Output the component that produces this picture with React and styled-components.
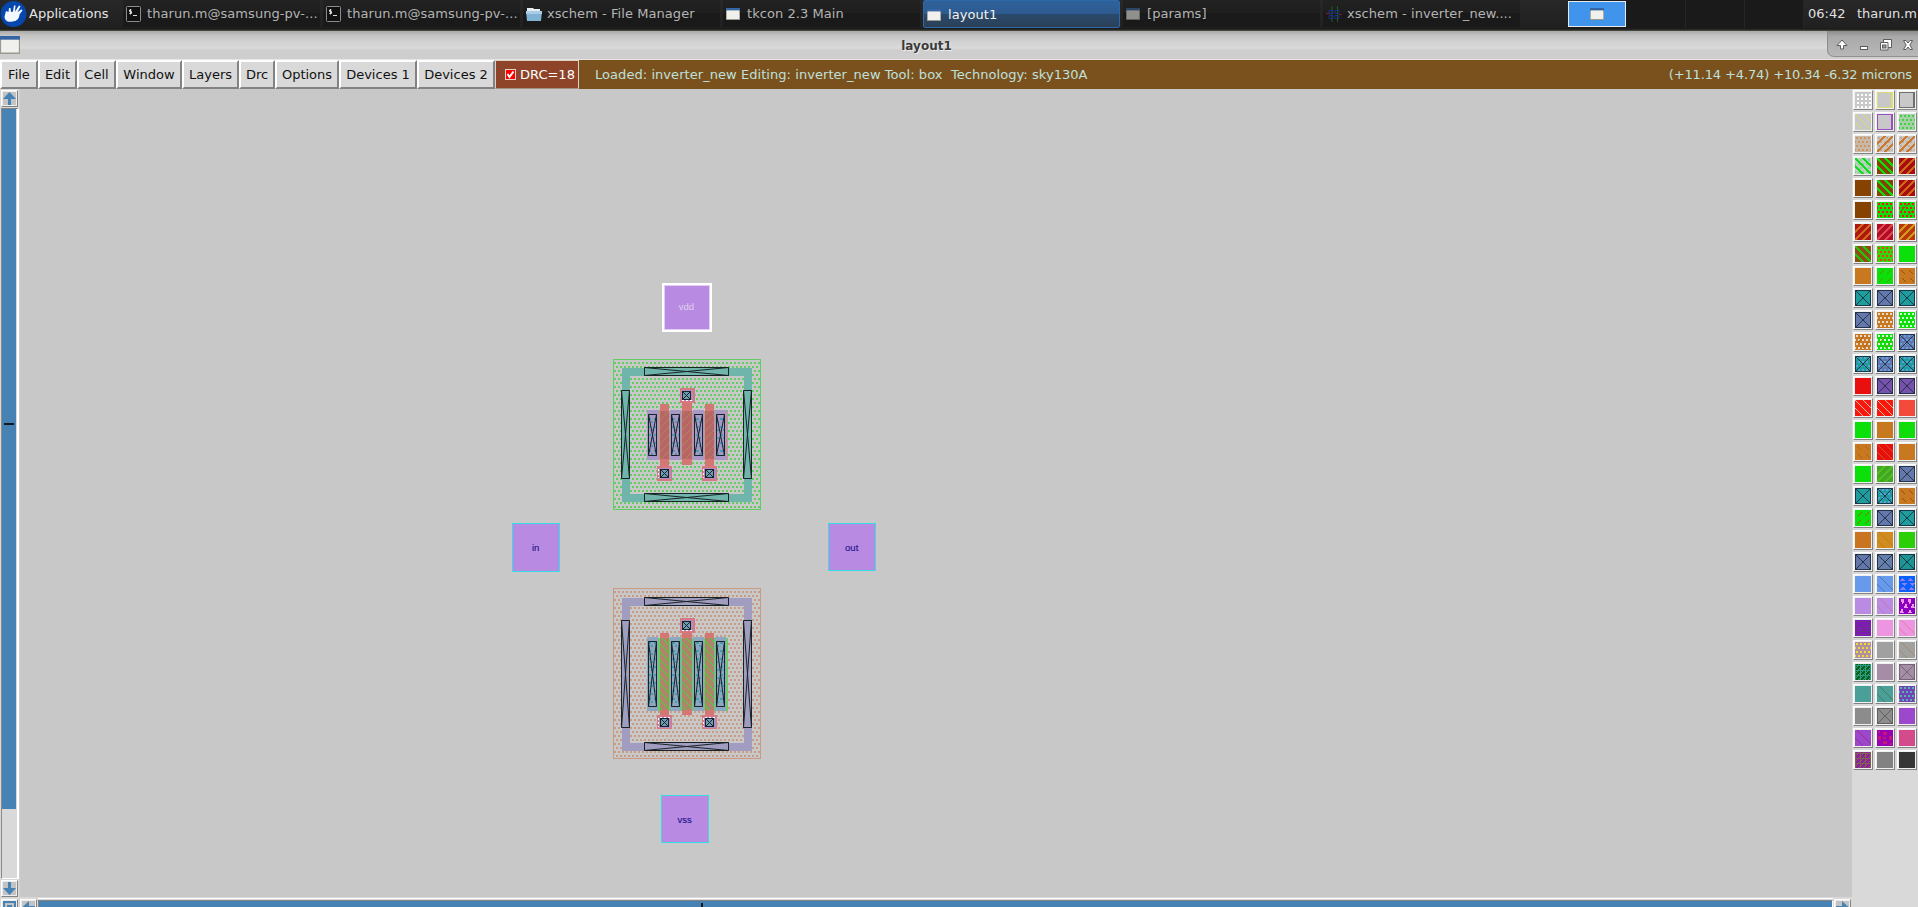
import React from "react";
import styled, { createGlobalStyle, css } from "styled-components";

const GlobalStyle = createGlobalStyle`
  html, body { margin: 0; padding: 0; overflow: hidden; background: #d9d9d9; }
  * { box-sizing: border-box; }
`;

const Desktop = styled.div`
  width: 1918px;
  height: 907px;
  display: flex;
  flex-direction: column;
  overflow: hidden;
  font-family: "DejaVu Sans", sans-serif;
  font-size: 13px;
`;

/* ---------- panel ---------- */

const Panel = styled.header`
  height: 31px;
  flex: none;
  display: flex;
  align-items: flex-start;
  background: linear-gradient(#282828, #202020 28px, #191919 29px, #35352f 30px, #55554d 31px);
  color: #b4b4b4;
  white-space: pre;
`;

const AppMenu = styled.div`
  width: 123px;
  height: 27px;
  display: flex;
  align-items: center;
  gap: 2px;
  color: #e4e4e4;
  svg { flex: none; }
`;

const TaskList = styled.nav`
  display: flex;
  gap: 3px;
  width: 1445px;
`;

const Task = styled.div`
  width: 197px;
  height: 27px;
  padding: 0 0 0 3px;
  display: flex;
  align-items: center;
  letter-spacing: 0.06px;
  background: linear-gradient(#222 0, #1e1e1e 50%, #191919 50%, #1a1a1a 100%);
  ${(p) =>
    p.$active &&
    css`
      height: 28px;
      padding: 1px 0 0 3px;
      color: #f2f2f2;
      border: 1px solid #2d68a8;
      border-radius: 2px;
      background: linear-gradient(#2f6199 0, #2d5b90 50%, #2a4a6c 50%, #2b4057 100%);
    `}
`;

const TaskIcon = styled.span`
  width: 21px;
  flex: none;
  line-height: 0;
  opacity: ${(p) => (p.$dim ? 0.55 : 1)};
`;

const Pager = styled.div`
  display: flex;
  width: 236px;
  height: 28px;
  background: #1a1a1a;
`;

const Workspace = styled.div`
  width: 59px;
  height: 28px;
  display: flex;
  align-items: center;
  justify-content: center;
  border-right: 1px solid #262626;
  ${(p) =>
    p.$active &&
    css`
      width: 58px;
      height: 26px;
      margin: 1px 1px 0 0;
      background: #4094ec;
      border: 1px solid #e8ecf0;
    `}
`;

const PanelText = styled.div`
  height: 27px;
  line-height: 27px;
  width: ${(p) => p.$w}px;
  padding-left: 4px;
  color: #e0e0e0;
`;

/* ---------- title bar ---------- */

const TitleBar = styled.div`
  height: 29px;
  flex: none;
  display: flex;
  background: linear-gradient(#a9a9a9 0, #c2c2c2 4px, #d2d2d2 11px, #dadada 17px, #cecece 19px, #cecece 28px, #e6e6e6 28px);
`;

const TitleIcon = styled.div`
  width: 91px;
  padding-top: 5px;
  line-height: 0;
`;

const Title = styled.div`
  flex: 1;
  font-weight: bold;
  font-size: 12px;
  line-height: 30px;
  padding-right: 65px;
  text-align: center;
  color: #3b3b3b;
  text-shadow: 1px 1px 0 #eee;
`;

const WindowControls = styled.div`
  width: 91px;
  height: 26px;
  border-bottom-left-radius: 7px;
  border-left: 1px solid #8c8c8c;
  border-bottom: 1px solid #929292;
  background: linear-gradient(#8d8d8d, #aaa 6px, #b7b7b7);
  line-height: 0;
`;

/* ---------- menu bar ---------- */

const MenuBar = styled.div`
  height: 29px;
  flex: none;
  display: flex;
  background: #d9d9d9;
  color: #000;
  white-space: pre;
`;

const MenuButton = styled.button`
  width: ${(p) => p.$w}px;
  height: 29px;
  padding: 0 0 1px;
  font: inherit;
  color: #111;
  background: #d9d9d9;
  border-style: solid;
  border-width: 2px;
  border-color: #fff #828282 #828282 #fff;
  text-align: center;
`;

const DrcButton = styled.div`
  width: 84px;
  height: 29px;
  display: flex;
  align-items: center;
  gap: 4px;
  padding: 0 0 1px 9px;
  color: #fff;
  background: #8e4429;
  border: 1px solid #dcd0c8;
  border-bottom-color: #a09080;
`;

const Status = styled.div`
  flex: 1;
  display: flex;
  justify-content: space-between;
  align-items: center;
  padding: 0 6px 1px 16px;
  background: #7a501c;
  color: #bfe0dc;
`;

const StatusText = styled.span`
  letter-spacing: ${(p) => p.$track}px;
`;

/* ---------- work area ---------- */

const WorkArea = styled.main`
  height: 818px;
  display: grid;
  grid-template-columns: 20px 1832px 66px;
  background: #d9d9d9;
`;

const SideScroll = styled.div`
  display: flex;
  flex-direction: column;
  height: 818px;
  overflow: hidden;
  border-right: 1px solid #d0d0d0;
`;

const ArrowButton = styled.div`
  width: 17px;
  height: 17px;
  margin: ${(p) => p.$m};
  flex: none;
  background: #c3c3c3;
  border-style: solid;
  border-width: 1px;
  border-color: #fff #828282 #828282 #fff;
  outline: 1px solid #ececec;
  outline-offset: -2px;
  line-height: 0;
`;

const VerticalTrough = styled.div`
  width: 18px;
  height: 771px;
  flex: none;
  margin: 0 0 0 1px;
  border: 1px solid #828282;
  border-right: 2px solid #fff;
  border-bottom: 1px solid #fff;
  border-left-color: #8a8a8a;
  background: #d9d9d9;
`;

const VerticalThumb = styled.div`
  width: 14px;
  height: 700px;
  padding-top: 314px;
  background: #4682b4;
`;

const VerticalMark = styled.div`
  width: 10px;
  height: 2px;
  margin-left: 2px;
  background: #101820;
`;

const CenterColumn = styled.div`
  display: flex;
  flex-direction: column;
  height: 818px;
  overflow: hidden;
`;

const LayoutView = styled.div`
  height: 808px;
  flex: none;
  background: #c8c8c8;
  line-height: 0;
`;

const BottomScroll = styled.div`
  display: flex;
  height: 20px;
  flex: none;
  border-top: 1px solid #d9d9d9;
`;

const HorizontalTrough = styled.div`
  flex: 1;
  height: 18px;
  border-top: 1px solid #fff;
  padding-top: 1px;
`;

const HorizontalThumb = styled.div`
  height: 14px;
  background: #4682b4;
  border-top: 1px solid #828282;
  border-left: 1px solid #828282;
  border-right: 1px solid #fff;
  padding: 2px 0 0 662px;
`;

const HorizontalMark = styled.div`
  width: 2px;
  height: 10px;
  background: #101820;
`;

const Palette = styled.aside`
  display: grid;
  grid-template-columns: repeat(3, 20px);
  grid-auto-rows: 20px;
  gap: 2px;
  align-content: start;
  padding: 1px 0 0 1px;
`;

const Cell = styled.div`
  width: 20px;
  height: 20px;
  padding: 1px;
  border-style: solid;
  border-width: 1px;
  border-color: #fff #828282 #828282 #fff;
  background: #f0f0f0;
  line-height: 0;
`;

/* ---------- icons ---------- */

const MouseLogo = () => (
  <svg width="27" height="27" viewBox="0 0 27 27">
    <ellipse cx="13.5" cy="14" rx="13" ry="13" fill="#0647ad" />
    <path d="M6 11l2.500 1L9 8l1.500 0 .5 4 2-.5 1-6 1.500 0-.5 6 4-6 1.500 .8-3 6 4-3 1 1.200-3 4c0 4-3 7-7 7-5 1-8-1-8-5z" fill="#f4f8ff" />
  </svg>
);
const TerminalIcon = () => (
  <svg width="15" height="16" viewBox="0 0 15 16">
    <rect x=".5" y=".5" width="14" height="15" rx="1" fill="#101010" stroke="#8c8c8c" />
    <path d="M5.5 4H3.5v1.5h2V7.500H3.300M4.500 3v5.500M7 9.500h4" stroke="#ddd" fill="none" />
  </svg>
);
const FolderIcon = () => (
  <svg width="16" height="14" viewBox="0 0 16 14">
    <path d="M1 1h6l1 1h6v5H1z" fill="#e6eef2" />
    <path d="M0 4h16l-1 10H1z" fill="#7fb2d4" />
    <path d="M0 4h16v3H0z" fill="#a8cde4" />
  </svg>
);
const WindowIcon = ({ w = 14, h = 12 }) => (
  <svg width={w} height={h} viewBox="0 0 14 12" preserveAspectRatio="none">
    <rect width="14" height="12" fill="#9a9a90" />
    <rect width="14" height="2.500" fill="#3465a4" />
    <rect x=".8" y="2.500" width="12.400" height="8.500" fill="#f0f0ec" />
  </svg>
);
const CircuitIcon = () => (
  <svg width="16" height="16" viewBox="0 0 16 16" fill="none">
    <path d="M6 0v16M11.500 0v16" stroke="#1c5c1c" />
    <path d="M3 4.500h4v3H3zM9 4.500h4v3H9zM3 9.500h4v3H3zM9 9.500h4v3H9z" stroke="#1c2f80" />
    <path d="M0 7.500h3M13 8.500h3" stroke="#802020" />
  </svg>
);

const arrowPaths = {
  up: "M7.500 1L14 8H9v6H6V8H1z",
  down: "M7.500 14L14 7H9V1H6v6H1z",
  left: "M1 7.500L8 1v5h6v3H8v5z",
  right: "M14 7.500L7 1v5H1v3h6v5z",
};
const Arrow = ({ dir }) => (
  <svg width="15" height="15" viewBox="0 0 15 15">
    <path d={arrowPaths[dir]} fill="#4682b4" />
  </svg>
);

const ControlIcons = () => (
  <svg width="90" height="25" viewBox="0 0 90 25">
    <g fill="#fff" stroke="#5c5c5c" strokeWidth="1">
      <path d="M14 9l5 5.500h-3.500V18h-3v-3.500H9z" />
      <rect x="32.500" y="15.500" width="7" height="3" />
      <path d="M55.500 8.500h8v8h-8z" />
      <path d="M52.500 11.500h7.500v7.500h-7.500z" />
      <rect x="54.500" y="14" width="3.500" height="3" fill="#999" />
      <path d="M75.500 9.500H78l2 2.500 2-2.500h2.500l-2.700 4.500 2.700 4.500H82L80 16l-2 2.500h-2.500l2.700-4.500z" />
    </g>
  </svg>
);

/* ---------- layer swatches ---------- */

const G = "#0be00b", O = "#c8781f", T = "#1f9c9c", B = "#6478ac", N = "#c8c8c8";
const BR = "#854200", R = "#e90f0f";

// [kind, base colour, mark colour, second mark colour]
const LAYERS = [
  ["grid", N, "#fff"], ["frame", N, "#dcdc70"], ["frame", N, "#707070"],
  ["fine", N, "#dedc60"], ["frame", N, "#9850c0"], ["dots", "#a8d0a8", "#40d440"],
  ["dots", "#c8b8a8", "#cc9860"], ["slash", N, "#cc7a30", "#c8a888"], ["slash", N, "#cc7a30", "#c8a888"],
  ["back", "#c0d0c0", "#14dc24", "#80d888"], ["back", BR, G], ["slash", "#a80c0c", "#cc6818"],
  ["solid", BR], ["back", BR, G], ["slash", "#a80c0c", "#cc6818"],
  ["solid", BR], ["dots", G, "#ee1a10"], ["dots", G, "#ee1a10", "#7a6800"],
  ["slash", "#ad170c", "#d06820"], ["slash", "#b30c24", "#dc4850"], ["slash", "#b83808", "#d49820"],
  ["back", "#8c4c12", "#24c40c"], ["dots", "#30d70b", "#e64414"], ["solid", G],
  ["solid", O], ["dash", G, "#5f9300"], ["backdash", O, "#985010"],
  ["x", T], ["x", B], ["x", T],
  ["x", B], ["dots", O, "#e6dacc"], ["dots", G, "#d8f4d8"],
  ["dots", O, "#e6dacc", "#a86020"], ["dots", G, "#d8f4d8", "#a88020"], ["x", B, "#639ee9"],
  ["x", T, "#5b9edc"], ["x", B, "#639ee9"], ["x", T, "#5b9edc"],
  ["solid", R], ["x", "#7652ac"], ["x", "#7652ac"],
  ["fine", "#fa180b", "#d8b8b8"], ["fine", "#fa180b", "#d8b8b8"], ["solid", "#f44a3c"],
  ["solid", G], ["solid", O], ["dash", G, "#52b414"],
  ["backdash", O, "#ae661c"], ["fine", R, "#c65e18"], ["solid", O],
  ["solid", G], ["slash", "#3ea824", "#54bc20"], ["x", B],
  ["x", T], ["x", T, "#5b9edc"], ["backdash", O, "#9c4c10"],
  ["dash", G, "#807000"], ["x", B], ["x", T],
  ["solid", "#c87420"], ["thin", "#d18c20", "#bb7b22"], ["solid", "#2acf08"],
  ["x", "#6377aa"], ["x", "#667faa"], ["x", "#1e9494"],
  ["solid", "#679aea"], ["thin", "#679aea", "#5078b0"], ["waves", "#0a60ff", "#8c80e8"],
  ["solid", "#b98be2"], ["thin", "#b98be2", "#d070b4"], ["cones", "#8c00c0", "#ee98ee"],
  ["bands", "#8018b8", "#6c3488"], ["solid", "#ec96e2"], ["thin", "#ec96e2", "#f07a9c"],
  ["dots", "#b08ea8", "#ece020"], ["solid", "#a0a0a0"], ["thin", "#a0a0a0", "#a88860"],
  ["noise", "#08601c", "#2c9c80"], ["solid", "#a58da5"], ["x", "#a58da5", null, "#746474"],
  ["solid", "#4b9f99"], ["thin", "#4b9f99", "#4c7c58"], ["dots", "#7044b4", "#54b4b0"],
  ["solid", "#8c8c8c"], ["x", "#8c8c8c", null, "#606060"], ["solid", "#9c48cc"],
  ["thin", "#9c48cc", "#98308c"], ["rings", "#9800b4", "#c41878"], ["solid", "#d44b8c"],
  ["noise", "#8c1ca0", "#806050"], ["solid", "#828282"], ["solid", "#363636"],
];

const staggered = (color) => {
  const out = [];
  for (let r = 0; r < 4; r++)
    for (let c = 0; c < 5; c++)
      out.push(<rect key={r + "-" + c} x={c * 4 + (r % 2 ? -1 : 1)} y={r * 4 + 1} width="2" height="2" fill={color} />);
  return out;
};

const Swatch = ({ layer }) => {
  const [kind, base, mark, extra] = layer;
  let marks = null;
  if (kind === "grid")
    marks = [0, 1, 2, 3].flatMap((r) =>
      [0, 1, 2, 3].map((c) => <rect key={`${r}${c}`} x={c * 4 + 2} y={r * 4 + 2} width="2" height="2" fill={mark} />)
    );
  if (kind === "frame") marks = <path d="M.5 .5h15v15H.5zM14.500 0v16" fill="none" stroke={mark} />;
  if (kind === "dots") marks = <>{staggered(mark)}{extra && <path d="M2 9L9 2M8 14l6-6" stroke={extra} />}</>;
  if (kind === "slash")
    marks = <>{extra && staggered(extra)}<path d="M-1 9L9-1M-1 17L17-1M7 17L17 7" stroke={mark} strokeWidth="1.800" /></>;
  if (kind === "back")
    marks = <>{extra && staggered(extra)}<path d="M-1 7L9 17M-1-1L17 17M7-1L17 9" stroke={mark} strokeWidth="1.800" /></>;
  if (kind === "fine") marks = <path d="M-1 7L9 17M-1-1L17 17M7-1L17 9" stroke={mark} />;
  if (kind === "thin") marks = <path d="M0 8L8 16M2 0L16 14" stroke={mark} />;
  if (kind === "dash") marks = <path d="M3 6l4-4M10 6l4-4M2 14l4-4M10 14l4-4" stroke={mark} />;
  if (kind === "backdash") marks = <path d="M2 2l4 4M10 2l4 4M3 10l4 4M11 10l4 4" stroke={mark} />;
  if (kind === "x")
    marks = (
      <>
        {mark && staggered(mark)}
        <path d="M0 0L16 16M16 0L0 16M.5.5h15v15H.5z" stroke={extra || "#182838"} strokeOpacity={extra ? 1 : 0.85} fill="none" />
      </>
    );
  if (kind === "waves") marks = <path d="M0 5l3-3 3 3zM8 5l3-3 4 3zM2 7h6l-3 3zM10 7h6l-3 3zM0 14l4-3 4 3zM9 14l3-3 4 3z" fill={mark} />;
  if (kind === "cones") marks = <path d="M2 1h3v3l-2 3zM9 1h3v3l-2 3zM5 9l2-4 2 5H5zM12 9l2-4 2 5h-4zM1 14l2-4 2 5H1zM9 15l2-4 2 4z" fill={mark} />;
  if (kind === "bands") marks = <path d="M0 1.500h16M0 4.500h3M6 4.500h4M13 4.500h3M0 7.500h16M3 9.500h4M10 9.500h3M0 11.500h16M0 14.500h16" stroke={mark} />;
  if (kind === "rings") marks = <path d="M6 2h4v3H6zM1 6h3v4H1zM12 6h3v4h-3zM6 11h4v3H6zM6 7h3v2H6zM1 1h2v2H1zM13 13h2v2h-2z" fill={mark} />;
  if (kind === "noise") {
    marks = [];
    for (let y = 0; y < 16; y++)
      for (let x = 0; x < 16; x++)
        if ((x * 7 + y * 5 + x * y * 3) % 5 < 2) marks.push(<rect key={`${x}-${y}`} x={x} y={y} width="1" height="1" fill={mark} />);
  }
  return (
    <svg width="16" height="16" viewBox="0 0 16 16" shapeRendering="crispEdges">
      <rect width="16" height="16" fill={base} />
      {marks}
    </svg>
  );
};

/* ---------- chip drawing ---------- */

const Crossed = ({ x, y, w, h, fill = "none" }) => (
  <path
    d={`M${x + 0.5} ${y + 0.5}h${w - 1}v${h - 1}h${1 - w}zl${w - 1} ${h - 1}M${x + w - 0.5} ${y + 0.5}l${1 - w} ${h - 1}`}
    fill={fill}
    stroke="#182326"
    strokeWidth="1"
  />
);

const ViaPad = ({ x, y, w = 15, h = 15, bx, by, dashSide }) => (
  <g shapeRendering="crispEdges">
    <rect x={x} y={y} width={w} height={h} fill="#d87880" />
    <rect x={bx - 1} y={by - 1} width={12} height={11} fill="#b08cc4" />
    <path
      d={dashSide === "bottom" ? `M${bx} ${by + 9.5}h10` : dashSide === "left" ? `M${bx - 1.5} ${by}v9` : `M${bx} ${by - 0.5}h10M${bx - 1.5} ${by}v9`}
      stroke="#fff"
      strokeDasharray="2 2"
    />
    <rect x={bx} y={by} width="9" height="9" fill="#6c9cb4" />
    <Crossed x={bx} y={by} w={9} h={9} />
  </g>
);

const Transistor = ({ top, bottom, dots, ring, wellTop, sideTop, sideH, diffTop, diffH, diff, diffEdge, gate, gateHatch, overlap, id, pads, gateTop, gateBottom, fingerFill }) => (
  <g>
    <defs>
      <pattern id={`${id}-dots`} width="4" height="8" patternUnits="userSpaceOnUse" x="613" y={top}>
        <path d="M1 3h2v2H1zM-1 7h2v2h-2zM3 7h2v2H3zM-1-1h2v2h-2zM3-1h2v2H3z" fill={dots} />
      </pattern>
      <pattern id={`${id}-hatch`} width="8" height="8" patternUnits="userSpaceOnUse">
        <path d={overlap} stroke={gateHatch} strokeWidth="1.200" fill="none" />
      </pattern>
      <pattern id={`${id}-metal`} width="6" height="8" patternUnits="userSpaceOnUse">
        <path d="M0 2h3v2H0zM3 5h2v2H3z" fill="#449cae" />
      </pattern>
    </defs>
    <g shapeRendering="crispEdges">
      <rect x="613.500" y={top + 0.5} width="147" height={bottom - top - 1} fill={`url(#${id}-dots)`} stroke={dots} />
      <path d={`M625.500 ${wellTop + 4.5}H747.500V${bottom - 12.500}H625.500z`} fill="none" stroke={ring} strokeWidth="8" />
      <rect x="647" y={diffTop} width="80" height={diffH} fill={diff} stroke={diffEdge} />
    </g>
    <Crossed x={644} y={wellTop} w={85} h={9} />
    <Crossed x={644} y={bottom - 17} w={85} h={9} />
    <Crossed x={621} y={sideTop} w={9} h={sideH} />
    <Crossed x={743} y={sideTop} w={9} h={sideH} />
    <g shapeRendering="crispEdges">
      {[[660, 9, gateTop + 3, gateBottom], [682, 10, gateTop, gateBottom - 2], [705, 9, gateTop + 3, gateBottom]].map(([x, w, y1, y2]) => (
        <g key={x}>
          <rect x={x - 2} y={diffTop} width={w + 4} height={diffH} fill={diffEdge} />
          <rect x={x} y={y1} width={w} height={y2 - y1} fill="#d37674" />
          <rect x={x} y={diffTop} width={w} height={diffH} fill={gate} />
        </g>
      ))}
      {[648, 671, 694, 716].map((x) => (
        <g key={x}>
          <rect x={x - 1} y={diffTop - 1} width="11" height={diffH + 2} fill={fingerFill} />
          <rect x={x} y={diffTop + 3} width="9" height={diffH - 6} fill={`url(#${id}-metal)`} />
        </g>
      ))}
    </g>
    {[[660, 9], [682, 10], [705, 9]].map(([x, w]) => (
      <rect key={x} x={x} y={diffTop} width={w} height={diffH} fill={`url(#${id}-hatch)`} />
    ))}
    {[648, 671, 694, 716].map((x) => (
      <Crossed key={x} x={x} y={diffTop + 3} w={9} h={diffH - 6} />
    ))}
    {pads.map((p, i) => (
      <ViaPad key={i} {...p} />
    ))}
  </g>
);

const PortLabel = styled.text`
  font-family: "Liberation Sans", Arial, sans-serif;
  font-size: 9.5px;
  text-anchor: middle;
  fill: ${(p) => p.$color};
  stroke: ${(p) => p.$color};
  stroke-width: 0.1px;
`;

const Port = ({ x, y, h = 48, label }) => (
  <g>
    <rect x={x + 0.5} y={y + 0.5} width="47" height={h - 1} fill="#b88ae2" stroke="#38dce4" />
    <PortLabel x={x + 23.7} y={y + 28} $color="#18128c">
      {label}
    </PortLabel>
  </g>
);

const ChipLayout = () => (
  <svg width="1832" height="808" viewBox="20 89 1832 808">
    <rect x="663" y="284" width="48" height="47" fill="#b88ae2" stroke="#fff" strokeWidth="2" />
    <rect x="664.500" y="285.500" width="45" height="44" fill="none" stroke="#e2cff4" />
    <PortLabel x="686.500" y="310" $color="#dccdee">
      vdd
    </PortLabel>
    <Transistor
      id="pmos" top={359} bottom={510} dots="#62cd62" ring="#6fb5ab" wellTop={367}
      sideTop={390} sideH={89} diffTop={411} diffH={48} diff="#b49aa4" diffEdge="#c09696"
      gate="#b86468" gateHatch="#a88450" overlap="M-1 9L9-1" fingerFill="#a898c8" gateTop={401} gateBottom={467}
      pads={[
        { x: 680, y: 388, bx: 682, by: 391, dashSide: "bottom" },
        { x: 657, y: 466, bx: 660, by: 469, dashSide: "left" },
        { x: 702, y: 466, bx: 705, by: 469, dashSide: "left" },
      ]}
    />
    <Transistor
      id="nmos" top={588} bottom={759} dots="#c99b85" ring="#a09dc0" wellTop={597}
      sideTop={620} sideH={108} diffTop={638} diffH={72} diff="#74c874" diffEdge="#68ca68"
      gate="#b0846c" gateHatch="#58c838" overlap="M-1-1L9 9" fingerFill="#8ca8c0" gateTop={630} gateBottom={717}
      pads={[
        { x: 680, y: 618, bx: 682, by: 621, dashSide: "bottom" },
        { x: 657, y: 715, h: 14, bx: 660, by: 718 },
        { x: 702, y: 715, h: 14, bx: 705, by: 718 },
      ]}
    />
    <Port x={512} y={523} h={49} label="in" />
    <Port x={828} y={523} label="out" />
    <Port x={661} y={795} label="vss" />
  </svg>
);

/* ---------- page ---------- */

const MENUS = [["File", 38], ["Edit", 39], ["Cell", 39], ["Window", 66], ["Layers", 57], ["Drc", 36], ["Options", 64], ["Devices 1", 78], ["Devices 2", 78]];

const TASKS = [
  { icon: <TerminalIcon />, label: "tharun.m@samsung-pv-..." },
  { icon: <TerminalIcon />, label: "tharun.m@samsung-pv-..." },
  { icon: <FolderIcon />, label: "xschem - File Manager" },
  { icon: <WindowIcon />, label: "tkcon 2.3 Main" },
  { icon: <WindowIcon />, label: "layout1", active: true },
  { icon: <WindowIcon />, label: "[params]", dim: true },
  { icon: <CircuitIcon />, label: "xschem - inverter_new...." },
];

export default function App() {
  return (
    <Desktop>
      <GlobalStyle />
      <Panel>
        <AppMenu>
          <MouseLogo />
          Applications
        </AppMenu>
        <TaskList>
          {TASKS.map((t, i) => (
            <Task key={i} $active={t.active}>
              <TaskIcon $dim={t.dim}>{t.icon}</TaskIcon>
              <span>{t.label}</span>
            </Task>
          ))}
        </TaskList>
        <Pager>
          <Workspace $active>
            <WindowIcon />
          </Workspace>
          <Workspace />
          <Workspace />
          <Workspace />
        </Pager>
        <PanelText $w={49}>06:42</PanelText>
        <PanelText $w={65}>tharun.m</PanelText>
      </Panel>
      <TitleBar>
        <TitleIcon>
          <WindowIcon w={20} h={18} />
        </TitleIcon>
        <Title>layout1</Title>
        <WindowControls>
          <ControlIcons />
        </WindowControls>
      </TitleBar>
      <MenuBar>
        {MENUS.map(([label, w]) => (
          <MenuButton key={label} $w={w}>
            {label}
          </MenuButton>
        ))}
        <DrcButton>
          <svg width="11" height="11" viewBox="0 0 11 11">
            <rect x=".5" y=".5" width="10" height="10" fill="#f00" stroke="#e8d0c8" />
            <path d="M2.500 5l2 3L8.500 2.500" fill="none" stroke="#fff" strokeWidth="2" />
          </svg>
          DRC=18
        </DrcButton>
        <Status>
          <StatusText $track={0.055}>
            {"Loaded: inverter_new Editing: inverter_new Tool: box  Technology: sky130A"}
          </StatusText>
          <StatusText $track={-0.13}>(+11.14 +4.74) +10.34 -6.32 microns</StatusText>
        </Status>
      </MenuBar>
      <WorkArea>
        <SideScroll>
          <ArrowButton $m="1px 0 1px 1px">
            <Arrow dir="up" />
          </ArrowButton>
          <VerticalTrough>
            <VerticalThumb>
              <VerticalMark />
            </VerticalThumb>
          </VerticalTrough>
          <ArrowButton $m="1px 0 2px 1px">
            <Arrow dir="down" />
          </ArrowButton>
          <ArrowButton $m="0 0 0 1px">
            <svg width="15" height="15" viewBox="0 0 15 15">
              <path d="M2 2h11v11H2z" fill="none" stroke="#4682b4" strokeWidth="2" />
              <rect x="5" y="5" width="5" height="5" fill="#4682b4" />
            </svg>
          </ArrowButton>
        </SideScroll>
        <CenterColumn>
          <LayoutView>
            <ChipLayout />
          </LayoutView>
          <BottomScroll>
            <ArrowButton $m="1px 1px 0 0">
              <Arrow dir="left" />
            </ArrowButton>
            <HorizontalTrough>
              <HorizontalThumb>
                <HorizontalMark />
              </HorizontalThumb>
            </HorizontalTrough>
            <ArrowButton $m="1px 1px 0 1px">
              <Arrow dir="right" />
            </ArrowButton>
          </BottomScroll>
        </CenterColumn>
        <Palette>
          {LAYERS.map((l, i) => (
            <Cell key={i}>
              <Swatch layer={l} />
            </Cell>
          ))}
        </Palette>
      </WorkArea>
    </Desktop>
  );
}
